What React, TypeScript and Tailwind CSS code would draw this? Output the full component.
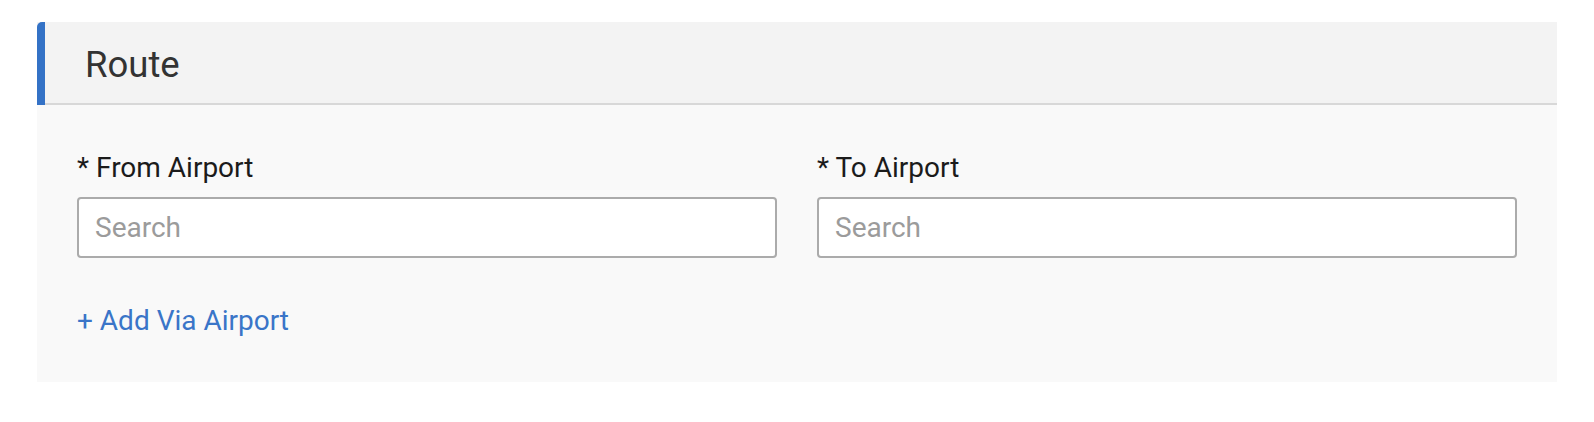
import React from 'react';

const fieldFont = "font-['Roboto','Liberation_Sans',sans-serif]";

function AirportField({ label, id }: { label: string; id: string }) {
  return (
    <div className="flex flex-col">
      <label htmlFor={id} className="text-[28px] leading-[30px] text-[#1b1b1b]">
        * {label}
      </label>
      <input
        id={id}
        type="text"
        placeholder="Search"
        className="mt-[14px] h-[61px] w-full rounded-[4px] border-2 border-[#ababab] bg-white px-4 text-[28px] text-[#222] placeholder:text-[#9b9b9b] outline-none"
      />
    </div>
  );
}

export default function App() {
  return (
    <div className={`min-h-[422px] bg-white px-[37px] pt-[22px] ${fieldFont}`}>
      <section>
        <div className="relative flex h-[83px] items-center border-b-2 border-[#d8d8d8] bg-[#f3f3f3] pl-[48px] pt-[4px]">
          <span className="absolute -bottom-[2px] left-0 top-0 w-[8px] rounded-tl-[5px] bg-[#3472c6]" />
          <h2 className="text-[36.5px] leading-[40px] text-[#333333]">Route</h2>
        </div>
        <div className="bg-[#f9f9f9] px-10 pb-[46px] pt-[48px]">
          <div className="grid grid-cols-2 gap-10">
            <AirportField label="From Airport" id="from-airport" />
            <AirportField label="To Airport" id="to-airport" />
          </div>
          <button type="button" className="mt-[48px] block text-[28px] leading-[30px] text-[#3a75c8]">
            + Add Via Airport
          </button>
        </div>
      </section>
    </div>
  );
}
